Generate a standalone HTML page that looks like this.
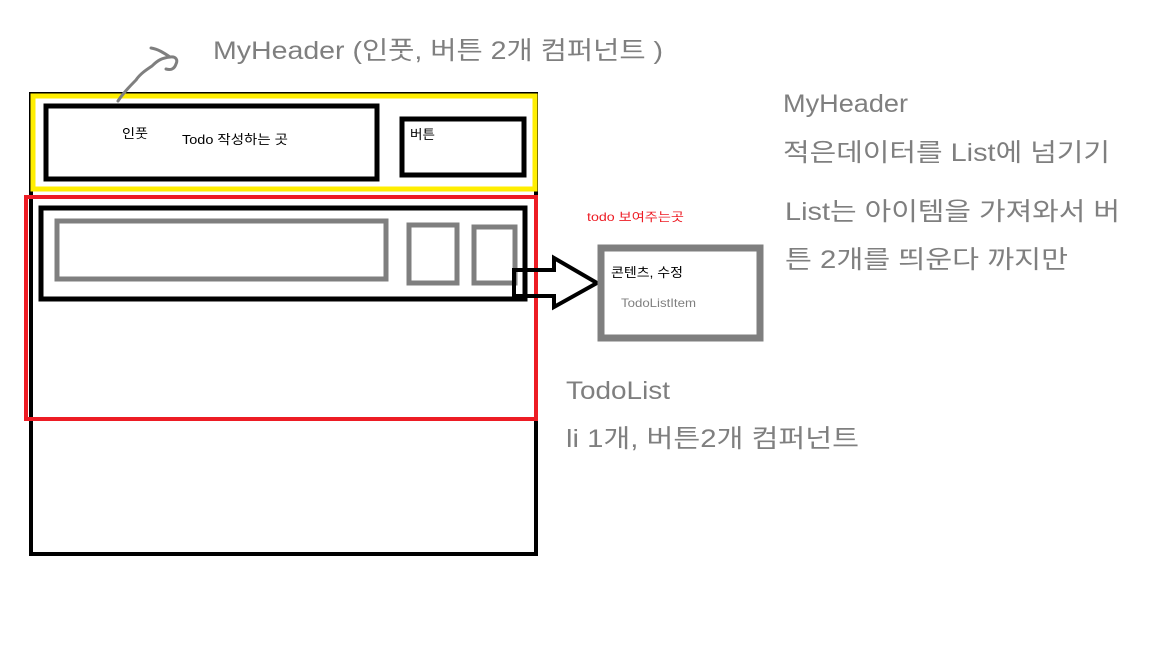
<!DOCTYPE html>
<html><head><meta charset="utf-8"><style>
html,body{margin:0;padding:0;background:#fff;width:1152px;height:648px;overflow:hidden}
svg{display:block}
text{font-family:"Liberation Sans","Noto Sans CJK KR","NanumGothic",sans-serif}
.g{fill:#7f7f7f;font-size:25px}
</style></head><body>
<svg width="1152" height="648" viewBox="0 0 1152 648" xmlns="http://www.w3.org/2000/svg">
<rect x="0" y="0" width="1152" height="648" fill="#fff"/>
<rect x="31" y="94" width="505" height="460" fill="none" stroke="#000" stroke-width="4"/>
<rect x="33" y="96" width="502" height="93" fill="none" stroke="#ffee00" stroke-width="5"/>
<rect x="46" y="106" width="331" height="73" fill="none" stroke="#000" stroke-width="5"/>
<rect x="402" y="119" width="122" height="56" fill="none" stroke="#000" stroke-width="5"/>
<rect x="26" y="197" width="510" height="222" fill="none" stroke="#ed1c24" stroke-width="4"/>
<rect x="41" y="208" width="484" height="91" fill="none" stroke="#000" stroke-width="5"/>
<rect x="57" y="221" width="329" height="58" fill="none" stroke="#7f7f7f" stroke-width="5"/>
<rect x="409" y="225" width="48" height="58" fill="none" stroke="#7f7f7f" stroke-width="5"/>
<rect x="474" y="227" width="41" height="56" fill="none" stroke="#7f7f7f" stroke-width="5"/>
<path d="M514 270 L554 270 L554 258 L597 283 L554 307 L554 296 L514 296 Z" fill="none" stroke="#000" stroke-width="4" stroke-linejoin="miter"/>
<rect x="601" y="248" width="159" height="90" fill="none" stroke="#7f7f7f" stroke-width="7"/>
<path d="M118 101 C124 92 130 86 136 80 C140 74 146 70 152 66 C158 60 162 58 170 57 C176 56 178 60 176 64 C174 70 170 70 166 69 M170 57 C164 53 158 49 151 48" fill="none" stroke="#7f7f7f" stroke-width="3" stroke-linecap="round"/>
<text x="213" y="59" class="g" textLength="450" lengthAdjust="spacingAndGlyphs">MyHeader (인풋, 버튼 2개 컴퍼넌트 )</text>
<text x="783" y="112" class="g" textLength="125" lengthAdjust="spacingAndGlyphs">MyHeader</text>
<text x="783" y="161" class="g" textLength="327" lengthAdjust="spacingAndGlyphs">적은데이터를 List에 넘기기</text>
<text x="785" y="220" class="g" textLength="335" lengthAdjust="spacingAndGlyphs">List는 아이템을 가져와서 버</text>
<text x="785" y="268" class="g" textLength="283" lengthAdjust="spacingAndGlyphs">튼 2개를 띄운다 까지만</text>
<text x="566" y="399" class="g" textLength="104" lengthAdjust="spacingAndGlyphs">TodoList</text>
<text x="566" y="447" class="g" textLength="293" lengthAdjust="spacingAndGlyphs">li 1개, 버튼2개 컴퍼넌트</text>
<text x="122" y="138" font-size="13" fill="#000" textLength="26" lengthAdjust="spacingAndGlyphs">인풋</text>
<text x="182" y="144" font-size="13" fill="#000" textLength="106" lengthAdjust="spacingAndGlyphs">Todo 작성하는 곳</text>
<text x="410" y="139" font-size="13" fill="#000" textLength="25" lengthAdjust="spacingAndGlyphs">버튼</text>
<text x="587" y="221" font-size="12" fill="#ed1c24" textLength="97" lengthAdjust="spacingAndGlyphs">todo 보여주는곳</text>
<text x="611" y="277" font-size="13" fill="#000" textLength="72" lengthAdjust="spacingAndGlyphs">콘텐츠, 수정</text>
<text x="621" y="307" font-size="12" fill="#7f7f7f" textLength="75" lengthAdjust="spacingAndGlyphs">TodoListItem</text>
</svg>
</body></html>
